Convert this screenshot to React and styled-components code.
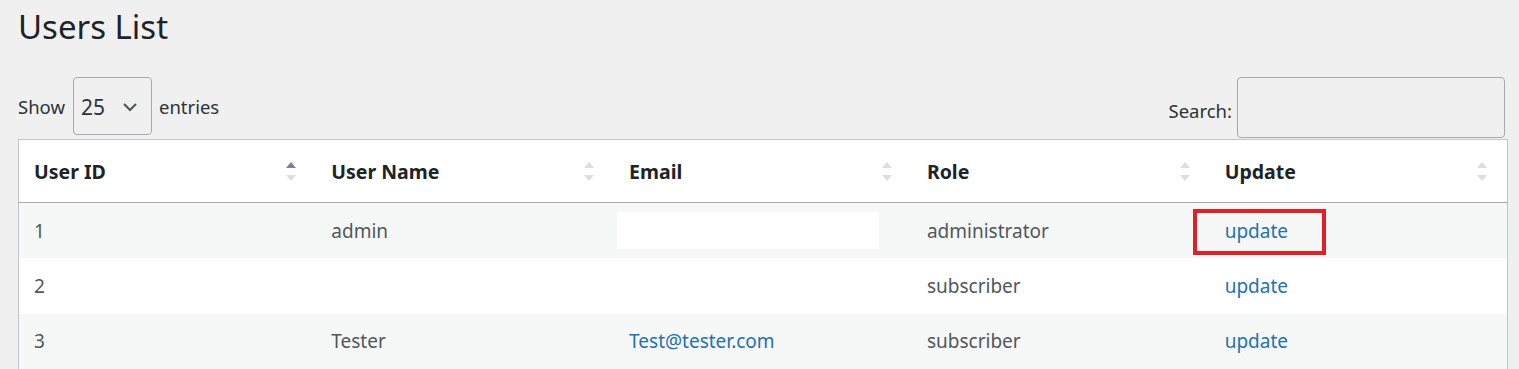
import React from "react";
import styled, { createGlobalStyle } from "styled-components";

const GlobalStyle = createGlobalStyle`
	html, body {
		margin: 0;
		padding: 0;
		background: #f0f0f1;
		font-family: "Noto Sans", "Open Sans", sans-serif;
		color: #3c434a;
	}
`;

const users = [
	{ id: 1, name: "admin", email: null, role: "administrator", hidden: true, marked: true },
	{ id: 2, name: "", email: "", role: "subscriber" },
	{ id: 3, name: "Tester", email: "Test@tester.com", role: "subscriber" },
];

const columns = ["User ID", "User Name", "Email", "Role", "Update"];

export default function App() {
	return (
		<>
			<GlobalStyle />
			<Page>
				<Title>Users List</Title>
				<Controls>
					<Length>
						<span>Show</span>
						<Select>
							<span>25</span>
							<svg width="16" height="10" viewBox="0 0 16 10">
								<path d="M2 2 L8 8 L14 2" fill="none" stroke="#50575e" strokeWidth="2.2" />
							</svg>
						</Select>
						<span>entries</span>
					</Length>
					<Filter>
						<span>Search:</span>
						<SearchInput />
					</Filter>
				</Controls>
				<Table>
					<thead>
						<tr>
							{columns.map((col, i) => (
								<Th key={col}>
									{col}
									<Sort>
										<Arrow $up $active={i === 0} />
										<Arrow />
									</Sort>
								</Th>
							))}
						</tr>
					</thead>
					<tbody>
						{users.map((u, i) => (
							<Row key={u.id} $odd={i % 2 === 0}>
								<Td>{u.id}</Td>
								<Td>{u.name}</Td>
								<Td>
									{u.hidden ? <Redacted /> : <Link>{u.email}</Link>}
								</Td>
								<Td>{u.role}</Td>
								<Td>
									<Link>update</Link>
									{u.marked && <Marker />}
								</Td>
							</Row>
						))}
					</tbody>
				</Table>
			</Page>
		</>
	);
}

const Page = styled.div`
	width: 1519px;
	padding: 0 12px 0 18px;
	box-sizing: border-box;
`;

const Title = styled.h1`
	margin: 0;
	padding-top: 5px;
	font-size: 33px;
	font-weight: 400;
	line-height: 44px;
	color: #1d2327;
`;

const Controls = styled.div`
	display: flex;
	justify-content: space-between;
	align-items: flex-start;
	margin-top: 28px;
	height: 62px;
	font-size: 18.5px;
	color: #2c3338;
`;

const Length = styled.div`
	display: flex;
	align-items: center;
	gap: 7px;
`;

const Select = styled.div`
	display: flex;
	align-items: center;
	justify-content: space-between;
	width: 79px;
	height: 58px;
	margin-left: 1px;
	box-sizing: border-box;
	padding: 2px 13px 0 7px;
	border: 1px solid #a7aaad;
	border-radius: 4px;
	font-size: 21px;
	color: #2c3338;
`;

const Filter = styled.div`
	display: flex;
	align-items: center;
	gap: 5px;
	margin-right: 2px;
	span {
		padding-top: 5px;
	}
`;

const SearchInput = styled.div`
	width: 268px;
	height: 61px;
	box-sizing: border-box;
	border: 1px solid #a7aaad;
	border-radius: 4px;
	background: #f0f0f1;
`;

const Table = styled.table`
	width: 1490px;
	border-collapse: collapse;
	table-layout: fixed;
	background: #fff;
	border: 1px solid #c3c4c7;
`;

const Th = styled.th`
	position: relative;
	height: 62px;
	padding: 0 15px;
	text-align: left;
	font-size: 19.5px;
	font-weight: 700;
	color: #1d2327;
	border-bottom: 1px solid #a7aaad;
`;

const Sort = styled.span`
	position: absolute;
	right: 20px;
	top: 22px;
	display: flex;
	flex-direction: column;
	gap: 7px;
`;

const Arrow = styled.span`
	width: 0;
	height: 0;
	border-left: 5px solid transparent;
	border-right: 5px solid transparent;
	${(p) =>
		p.$up
			? `border-bottom: 6px solid ${p.$active ? "#7b809b" : "#dcdde1"};`
			: `border-top: 6px solid #dcdde1;`}
`;

const Row = styled.tr`
	height: 55.5px;
	background: ${(p) => (p.$odd ? "#f6f7f7" : "#fff")};
`;

const Td = styled.td`
	position: relative;
	padding: 0 15px;
	font-size: 19px;
	color: #50575e;
`;

const Link = styled.span`
	color: #2271b1;
`;

const Redacted = styled.span`
	display: block;
	width: 262px;
	height: 37px;
	margin-left: -12px;
	background: #fff;
`;

const Marker = styled.span`
	position: absolute;
	left: -17px;
	top: 6px;
	width: 133px;
	height: 46px;
	box-sizing: border-box;
	border: 4px solid #e31e24;
`;
